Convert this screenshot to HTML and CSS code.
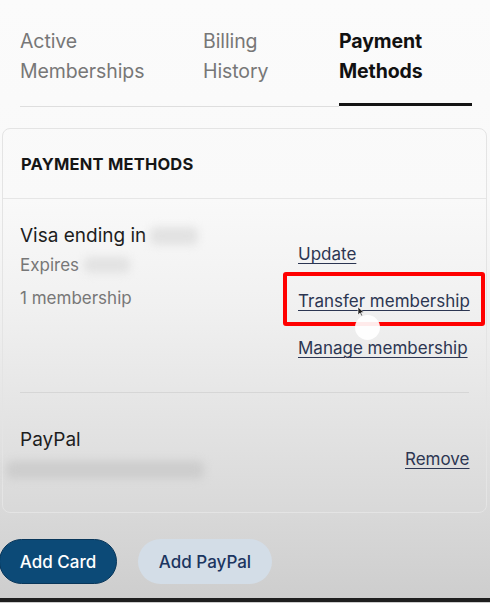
FILE: index.html
```html
<!DOCTYPE html>
<html lang="en">
<head>
<meta charset="utf-8">
<title>Payment Methods</title>
<link rel="stylesheet" href="styles.css">
</head>
<body>
<div class="page">
  <nav class="tabs">
    <div class="tab">Active<br>Memberships</div>
    <div class="tab">Billing<br>History</div>
    <div class="tab active">Payment<br>Methods</div>
  </nav>

  <section class="card">
    <h2 class="card-title">PAYMENT METHODS</h2>

    <div class="method visa">
      <div class="info">
        <div class="name">Visa ending in<span class="blur blur-num"></span></div>
        <div class="sub first">Expires<span class="blur blur-exp"></span></div>
        <div class="sub second">1 membership</div>
      </div>
      <div class="actions">
        <a class="link" href="#">Update</a>
        <a class="link" href="#">Transfer membership</a>
        <a class="link" href="#">Manage membership</a>
      </div>
    </div>

    <div class="divider"></div>

    <div class="method paypal">
      <div class="info">
        <div class="name">PayPal</div>
        <div class="blur blur-mail"></div>
      </div>
      <div class="actions single">
        <a class="link" href="#">Remove</a>
      </div>
    </div>
  </section>

  <div class="buttons">
    <button class="btn primary">Add Card</button>
    <button class="btn secondary">Add PayPal</button>
  </div>
  <div class="bottom-bar"></div>

  <div class="highlight"></div>
  <svg class="cursor" width="8" height="11" viewBox="0 0 8 11"><path d="M1 1 L1 9 L3 7 L4.5 10 L5.5 9.5 L4.2 6.6 L7 6.6 Z" fill="#222" stroke="#fff" stroke-width="0.6"/></svg>
  <div class="touch"></div>
</div>
</body>
</html>
```

FILE: styles.css
```css
html, body {
  margin: 0;
  padding: 0;
}
body {
  width: 490px;
  height: 603px;
  overflow: hidden;
  font-family: Inter, "Liberation Sans", sans-serif;
  background: linear-gradient(180deg, #fbfbfb 0%, #f9f9f9 33%, #f1f1f1 50%, #e6e6e6 66%, #dadada 83%, #cdcdcd 100%);
}
.page {
  position: relative;
  height: 603px;
}
.tabs {
  display: grid;
  grid-template-columns: 183px 136px 133px;
  padding: 26px 0 0 20px;
  align-items: end;
}
.tab {
  font-size: 19.5px;
  line-height: 30px;
  color: #777;
  padding-bottom: 20px;
  border-bottom: 1px solid #dedede;
  letter-spacing: -0.1px;
}
.tab.active {
  color: #111;
  font-weight: 700;
  padding-bottom: 17px;
  border-bottom: 3px solid #141414;
  margin-bottom: 1px;
}
.card {
  margin: 21px 3px 0 2px;
  border: 1px solid #e4e4e4;
  border-radius: 8px;
}
.card-title {
  margin: 0;
  height: 69px;
  line-height: 70px;
  padding: 0 18px;
  font-size: 16.5px;
  font-weight: 700;
  color: #161616;
  letter-spacing: 0.2px;
  border-bottom: 1px solid #e6e6e6;
}
.method {
  display: grid;
  grid-template-columns: 278px auto;
  padding: 0 17px;
}
.visa {
  padding-top: 25px;
  padding-bottom: 32px;
}
.name {
  font-size: 19px;
  line-height: 24px;
  color: #1d1d1d;
  display: flex;
  align-items: center;
}
.sub {
  font-size: 17px;
  line-height: 24px;
  color: #777;
  display: flex;
  align-items: center;
}
.sub.first { margin-top: 5px; }
.sub.second { margin-top: 9px; }
.blur {
  display: inline-block;
  background: #e2e2e2;
  filter: blur(4px);
  border-radius: 6px;
}
.blur-num {
  width: 48px;
  height: 18px;
  margin-left: 4px;
}
.blur-exp {
  width: 46px;
  height: 16px;
  margin-left: 5px;
}
.blur-mail {
  width: 198px;
  height: 18px;
  margin: 9px 0 0 -14px;
  background: #cdcdcd;
}
.actions {
  display: flex;
  flex-direction: column;
  gap: 23px;
  padding-top: 18px;
}
.link {
  font-size: 17px;
  line-height: 24px;
  color: #2c3652;
  text-decoration: underline;
  text-decoration-thickness: 1px;
  text-underline-offset: 3px;
  white-space: nowrap;
}
.divider {
  margin: 0 17px;
  border-top: 1px solid #d6d6d6;
}
.paypal {
  grid-template-columns: 385px auto;
  padding-top: 35px;
  padding-bottom: 29px;
}
.actions.single {
  padding-top: 19px;
}
.buttons {
  display: flex;
  gap: 21px;
  margin-top: 26px;
  margin-left: -1px;
}
.btn {
  height: 45px;
  border: none;
  border-radius: 23px;
  font-family: Inter, "Liberation Sans", sans-serif;
  font-size: 17px;
  font-weight: 500;
  padding: 0;
}
.btn.primary {
  width: 118px;
  background: #0c4a77;
  color: #fff;
  border: 1px solid #08365a;
}
.btn.secondary {
  width: 134px;
  background: #d3dde7;
  color: #1b3560;
}
.bottom-bar {
  margin-top: 14px;
  height: 4px;
  background: #1e1e1e;
}
.highlight {
  position: absolute;
  left: 283px;
  top: 272px;
  width: 194px;
  height: 46px;
  border: 4px solid #ff0000;
  border-radius: 3px;
}
.cursor {
  position: absolute;
  left: 357px;
  top: 306px;
}
.touch {
  position: absolute;
  left: 355px;
  top: 315px;
  width: 25px;
  height: 25px;
  border-radius: 50%;
  background: rgba(255,255,255,0.92);
}
```
